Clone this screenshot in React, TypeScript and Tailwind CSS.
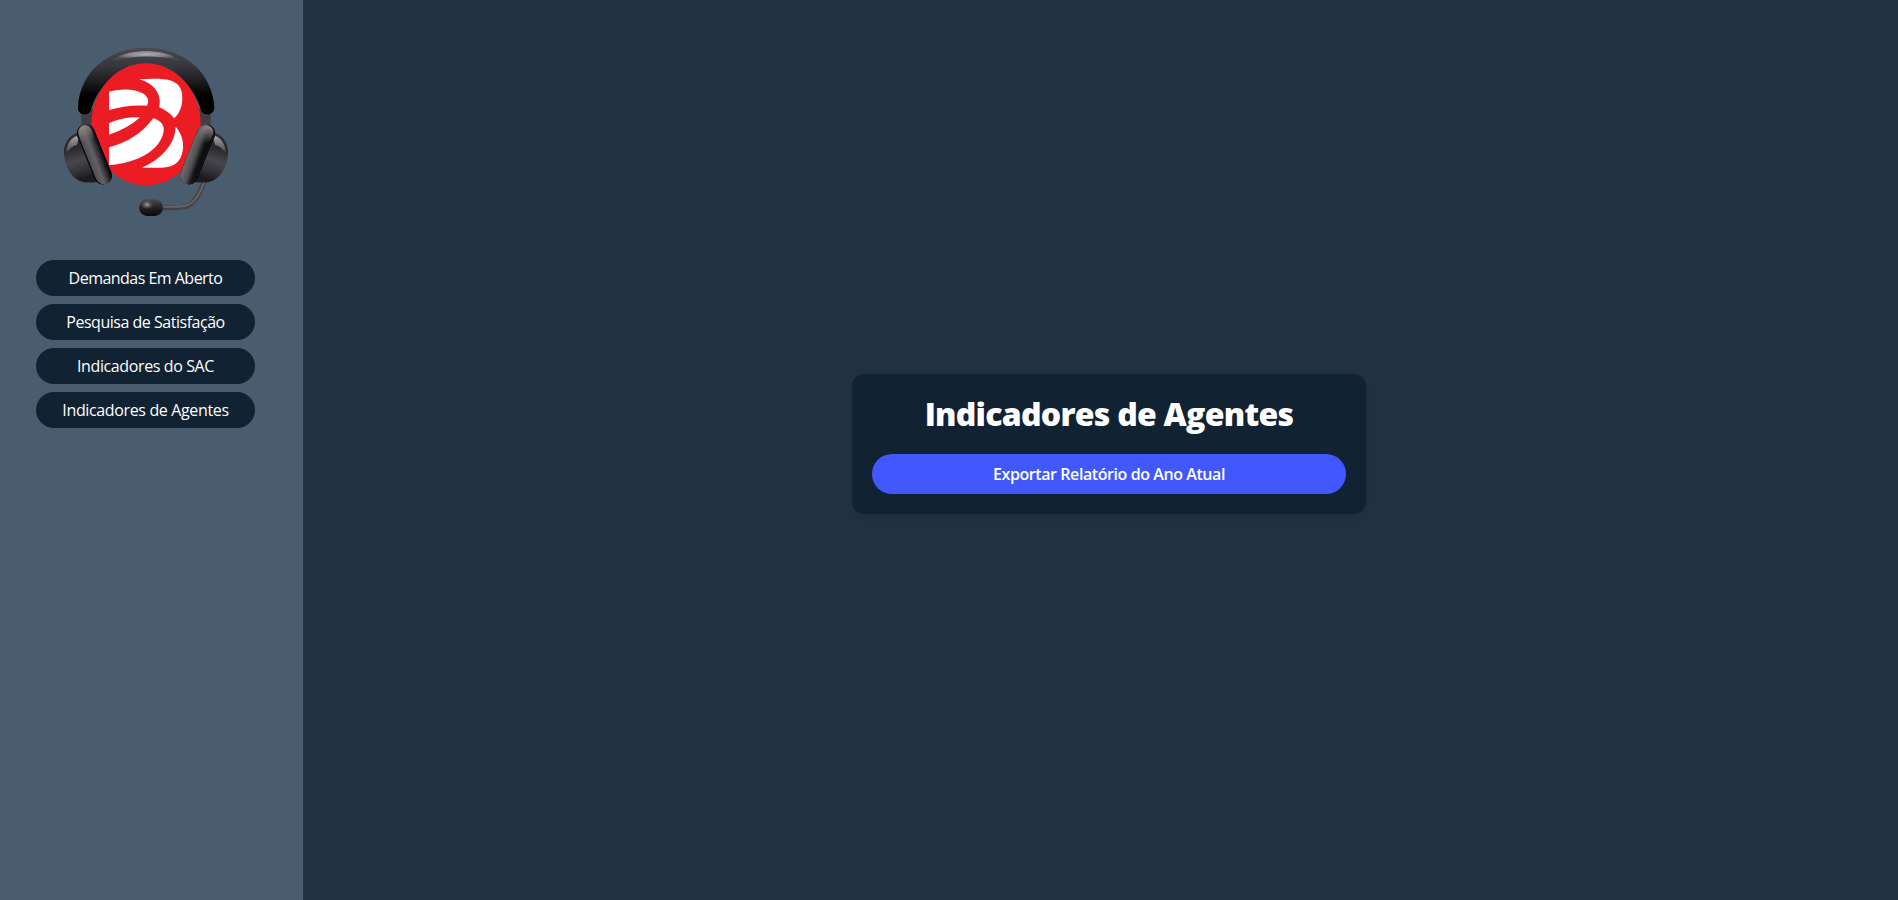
const menuItems: { label: string; spacing: string }[] = [
  { label: 'Demandas Em Aberto', spacing: 'tracking-[-0.52px]' },
  { label: 'Pesquisa de Satisfação', spacing: 'tracking-[-0.48px]' },
  { label: 'Indicadores do SAC', spacing: 'tracking-[-0.38px]' },
  { label: 'Indicadores de Agentes', spacing: 'tracking-[-0.36px]' },
];

function EarCup() {
  return (
    <g>
      <path d="M112 308C84 318 70 342 72 372C75 412 96 448 128 456C145 459 160 458 172 455L116 312Z" fill="url(#cup)" />
      <path d="M110 317C92 325 80 343 79 366C91 358 101 343 110 346L116 326Z" fill="url(#cupShine)" />
      <g transform="rotate(-22 163 373)">
        <rect x="136" y="278" width="54" height="190" rx="26" fill="#08080a" />
        <rect x="140" y="278" width="50" height="190" rx="25" fill="url(#pad)" />
        <rect x="143" y="281" width="40" height="54" rx="20" fill="url(#padShine)" />
      </g>
    </g>
  );
}

function Logo() {
  return (
    <svg className="h-[200px] w-[220px] shrink-0" viewBox="0 0 660 600" role="img" aria-label="SAC">
      <defs>
        <linearGradient id="band" x1="0" y1="52" x2="0" y2="252" gradientUnits="userSpaceOnUse">
          <stop offset="0" stopColor="#4b4a50" />
          <stop offset="0.3" stopColor="#36353b" />
          <stop offset="0.55" stopColor="#18181b" />
          <stop offset="0.72" stopColor="#000" />
          <stop offset="1" stopColor="#000" />
        </linearGradient>
        <radialGradient id="bandShine" cx="0.5" cy="0.35" r="0.55">
          <stop offset="0" stopColor="#b0aeb0" />
          <stop offset="0.55" stopColor="#858388" />
          <stop offset="1" stopColor="#4b4a50" />
        </radialGradient>
        <linearGradient id="cup" x1="0" y1="0" x2="0.2" y2="1">
          <stop offset="0" stopColor="#303035" />
          <stop offset="0.35" stopColor="#29292d" />
          <stop offset="0.62" stopColor="#46464c" />
          <stop offset="0.85" stopColor="#303035" />
          <stop offset="1" stopColor="#1c1c20" />
        </linearGradient>
        <linearGradient id="cupShine" x1="0" y1="0" x2="0" y2="1">
          <stop offset="0" stopColor="#a5a3a4" />
          <stop offset="1" stopColor="#4a4a4e" />
        </linearGradient>
        <linearGradient id="pad" x1="0" y1="0" x2="1" y2="0.1">
          <stop offset="0" stopColor="#4c4c4f" />
          <stop offset="0.45" stopColor="#626265" />
          <stop offset="0.72" stopColor="#3a3a3d" />
          <stop offset="1" stopColor="#050506" />
        </linearGradient>
        <linearGradient id="rightPad" x1="1" y1="0" x2="0" y2="0.15">
          <stop offset="0" stopColor="#050506" />
          <stop offset="0.35" stopColor="#141415" />
          <stop offset="0.65" stopColor="#525255" />
          <stop offset="1" stopColor="#68686b" />
        </linearGradient>
        <linearGradient id="padShine" x1="0" y1="0" x2="0" y2="1">
          <stop offset="0" stopColor="#918b8b" />
          <stop offset="1" stopColor="#6b6869" stopOpacity="0" />
        </linearGradient>
        <linearGradient id="mic" x1="0" y1="0" x2="0" y2="1">
          <stop offset="0" stopColor="#4b4b4f" />
          <stop offset="0.5" stopColor="#232326" />
          <stop offset="1" stopColor="#08080a" />
        </linearGradient>
        <radialGradient id="micShine">
          <stop offset="0" stopColor="#a19e9f" />
          <stop offset="1" stopColor="#57565a" stopOpacity="0.2" />
        </radialGradient>
      </defs>

      <path d="M124 238H160V300H124Z M476 238H512V300H476Z" fill="#3f3e45" />
      <path
        d="M114 230C120 126 205 53 318 53C431 53 516 126 523 230C524 244 515 253 502 253C489 253 483 245 481 233C460 165 403 120 318 120C233 120 176 165 155 233C153 245 147 253 134 253C121 253 113 244 114 230Z"
        fill="url(#band)"
      />
      <ellipse cx="318" cy="283" rx="164" ry="183" fill="#ec1c24" />
      <path d="M220 88C252 69 286 63 318 63C350 63 386 69 417 88C420 91 416 92 411 90C350 76 286 76 226 91C220 92 217 91 220 88Z" fill="url(#bandShine)" />

      <g fill="#fff">
        <path d="M207 185C247 175 285 177 308 190C325 200 328 213 321 227C279 224 242 230 207 240Z" />
        <path d="M297 148C335 146 370 145 396 153C421 163 428 183 427 207C426 232 417 253 402 265C391 250 377 240 358 232C366 193 343 160 297 148Z" />
        <path d="M207 280C236 266 266 261 300 262C275 286 244 301 207 314Z" />
        <path d="M207 352C263 338 306 310 340 265C360 271 374 284 371 304C365 339 338 366 300 383C270 396 240 402 207 406Z" />
        <path d="M407 290C423 307 431 331 429 355C426 389 409 407 382 411C359 415 331 413 305 413C357 391 406 346 407 290Z" />
      </g>

      <path d="M493 454C482 487 466 516 444 527C426 536 397 533 363 533" fill="none" stroke="#434247" strokeWidth="15" />
      <path d="M493 454C482 487 466 515 443 525C425 533 397 530 363 530" fill="none" stroke="#646267" strokeWidth="6" />
      <EarCup />
      <g transform="translate(636 0) scale(-1 1)">
        <EarCup />
      </g>
      <g transform="rotate(22 473 373)">
        <rect x="446" y="278" width="50" height="190" rx="25" fill="url(#rightPad)" />
        <rect x="453" y="281" width="40" height="54" rx="20" fill="url(#padShine)" />
      </g>
      <rect x="297" y="508" width="72" height="50" rx="25" fill="url(#mic)" />
      <ellipse cx="321" cy="524" rx="17" ry="13" fill="url(#micShine)" />
    </svg>
  );
}

export default function App() {
  return (
    <div className="flex h-screen overflow-hidden bg-[#223243] font-['Segoe_UI','Open_Sans',sans-serif] text-white">
      <aside className="flex w-[303px] shrink-0 flex-col bg-[#4a5d6e] pt-[30px] pr-12 pl-9">
        <div className="flex pl-1">
          <Logo />
        </div>
        <nav className="mt-[30px] flex flex-col gap-2">
          {menuItems.map((item) => (
            <button key={item.label} className="h-9 w-[219px] rounded-[20px] bg-[#112232] text-base leading-6 whitespace-nowrap">
              <span className={item.spacing}>{item.label}</span>
            </button>
          ))}
        </nav>
      </aside>
      <main className="flex flex-1 items-center justify-center pb-3 pl-[17px]">
        <section className="flex h-[140px] w-[514px] flex-col rounded-xl bg-[#112232] p-5 shadow-[0_4px_12px_rgba(0,0,0,0.1)]">
          <h1 className="h-10 text-center text-[32px] leading-10 font-black whitespace-nowrap tracking-[-0.74px]">Indicadores de Agentes</h1>
          <button className="mt-5 h-10 rounded-[20px] bg-[#4158ff] text-base font-semibold tracking-[-0.42px]">
            Exportar Relatório do Ano Atual
          </button>
        </section>
      </main>
    </div>
  );
}
